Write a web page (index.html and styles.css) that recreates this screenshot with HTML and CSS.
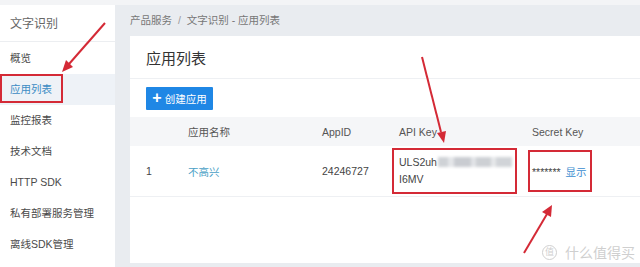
FILE: index.html
```html
<!DOCTYPE html>
<html>
<head>
<meta charset="UTF-8">
    <title>文字识别 - 应用列表</title>
    <link rel="stylesheet" href="styles.css">
</head>
<body>
    <div class="topstrip"></div>
    <div class="layout">
        <div class="sidebar">
            <div class="side-title">文字识别</div>
            <div class="menu">
                <div class="menu-item">概览</div>
                <div class="menu-item active">应用列表</div>
                <div class="menu-item">监控报表</div>
                <div class="menu-item">技术文档</div>
                <div class="menu-item">HTTP SDK</div>
                <div class="menu-item">私有部署服务管理</div>
                <div class="menu-item">离线SDK管理</div>
            </div>
        </div>
        <div class="main">
            <div class="crumb">产品服务 <span class="sep">/</span> 文字识别 - 应用列表</div>
            <div class="card">
                <div class="card-title">应用列表</div>
                <div class="toolbar">
                    <button class="btn-create"><span class="plus">+</span> 创建应用</button>
                </div>
                <div class="table">
                    <div class="row head">
                        <div></div>
                        <div>应用名称</div>
                        <div>AppID</div>
                        <div>API Key</div>
                        <div>Secret Key</div>
                    </div>
                    <div class="row body">
                        <div>1</div>
                        <div class="link">不高兴</div>
                        <div>24246727</div>
                        <div class="apikey">ULS2uh<span class="blur"></span><br>I6MV</div>
                        <div>******* <span class="show">显示</span></div>
                    </div>
                </div>
            </div>
        </div>
    </div>

    <div class="mark"><span class="mark-icon">值</span>什么值得买</div>

    <svg class="notes" width="640" height="267" viewBox="0 0 640 267">
        <g fill="none" stroke="#d42a36" stroke-width="2">
            <rect x="1" y="75" width="61" height="27"/>
            <rect x="393" y="149" width="123" height="44"/>
            <rect x="529" y="151" width="62" height="40"/>
            <line x1="105" y1="23" x2="69" y2="64"/>
            <line x1="422" y1="57" x2="441" y2="132"/>
            <line x1="524" y1="253" x2="547" y2="214"/>
        </g>
        <g fill="#d42a36">
            <polygon points="62,72 73,67 66,60"/>
            <polygon points="444,143 446,131 437,133"/>
            <polygon points="552,205 551,217 542,212"/>
        </g>
    </svg>
</body>
</html>
```

FILE: styles.css
```css
body { margin: 0; width: 640px; height: 267px; overflow: hidden; position: relative; background: #f3f4f6; font-family: "Liberation Sans", "Noto Sans CJK SC", sans-serif; color: #444; }
.topstrip { height: 5px; background: #f3f4f6; }
.layout { display: flex; height: 262px; }

.sidebar { width: 115px; background: #fff; flex-shrink: 0; }
.side-title { height: 36px; line-height: 38px; padding-left: 10px; font-size: 12px; color: #666; border-bottom: 1px solid #eceef1; }
.menu { padding-top: 1px; }
.menu-item { height: 31px; line-height: 31px; padding-left: 10px; font-size: 10.5px; color: #4a4a4a; }
.menu-item.active { background: #eef2f7; color: #3b8cc4; }

.main { flex: 1; background: #e9ecf0; padding-left: 15px; }
.crumb { height: 31px; line-height: 30px; font-size: 10.5px; color: #777; }
.crumb .sep { margin: 0 3px; color: #999; }
.card { background: #fff; height: 227px; }
.card-title { height: 42px; line-height: 45px; padding-left: 16px; font-size: 15px; color: #333; border-bottom: 1px solid #eef0f3; }
.toolbar { padding: 8px 16px 7px; }
.btn-create { width: 67px; height: 23px; padding: 0; margin: 0; border: none; border-radius: 1px; background: #1f87e5; color: #fff; font-family: inherit; font-size: 10.5px; display: flex; align-items: center; justify-content: center; gap: 3px; }
.btn-create .plus { font-size: 16px; font-weight: bold; line-height: 1; margin-top: -2px; }

.row { display: grid; grid-template-columns: 42px 134px 77px 133px 1fr; padding-left: 16px; align-items: center; font-size: 10.5px; }
.row.head { height: 29px; background: #f5f6f8; color: #555; }
.row.body { height: 50px; border-bottom: 1px solid #eef0f3; color: #444; }
.link { color: #4a9fc6; }
.apikey { line-height: 17px; }
.blur { display: inline-block; width: 74px; height: 10px; margin-left: 1px; vertical-align: -1px; filter: blur(1.5px);
    background: linear-gradient(90deg, #cfd2d6 0 14%, #e4e6e9 14% 22%, #c9ccd1 22% 44%, #e2e4e7 44% 52%, #cdd0d4 52% 72%, #e6e8ea 72% 78%, #d1d4d8 78% 100%); }
.show { color: #3a8dd0; margin-left: 2px; }

.mark { position: absolute; left: 542px; top: 242px; font-size: 14px; color: #cfcfcf; display: flex; align-items: center; gap: 8px; }
.mark-icon { width: 13px; height: 13px; border: 1.5px solid #d0d0d0; border-radius: 50%; font-size: 9px; line-height: 13px; text-align: center; }
.notes { position: absolute; left: 0; top: 0; }
```
